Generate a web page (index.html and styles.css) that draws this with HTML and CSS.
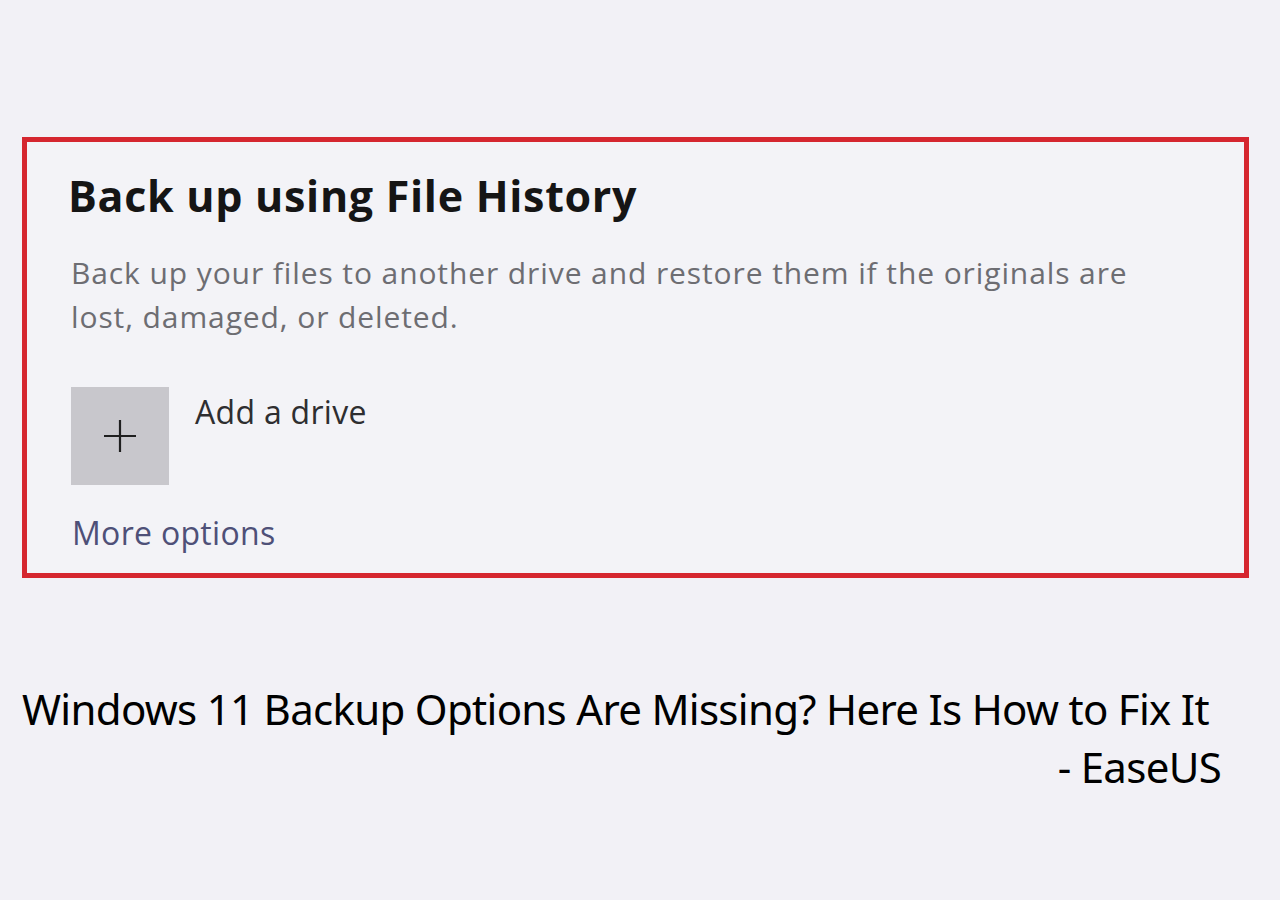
FILE: index.html
```html
<!DOCTYPE html>
<html lang="en">
<head>
<meta charset="utf-8">
<title>Windows 11 Backup Options Are Missing? Here Is How to Fix It - EaseUS</title>
<link rel="stylesheet" href="styles.css">
</head>
<body>
<main class="page">
  <section class="card">
    <h2 class="card-title">Back up using File History</h2>
    <p class="card-desc">Back up your files to another drive and restore them if the originals are lost, damaged, or deleted.</p>
    <div class="drive-row">
      <div class="plus-tile">
        <svg width="34" height="34" viewBox="0 0 34 34" aria-hidden="true">
          <path d="M17 1V33M1 17H33" stroke="#1f1f1f" stroke-width="2.2" fill="none"/>
        </svg>
      </div>
      <span class="drive-label">Add a drive</span>
    </div>
    <a class="more-link">More options</a>
  </section>
  <div class="caption">
    <div class="caption-line">Windows 11 Backup Options Are Missing? Here Is How to Fix It</div>
    <div class="caption-line caption-right">- EaseUS</div>
  </div>
</main>
</body>
</html>
```

FILE: styles.css
```css
html, body {
  margin: 0;
  padding: 0;
}
body {
  background: #f2f1f6;
  width: 1280px;
  height: 900px;
  overflow: hidden;
}
.page {
  padding: 137px 31px 0 22px;
}
.card {
  box-sizing: border-box;
  width: 1227px;
  height: 441px;
  border: 5px solid #d5262f;
  background: #f3f3f7;
  padding: 26px 40px 0 41px;
  font-family: "Open Sans", "Noto Sans", sans-serif;
}
.card-title {
  margin: 0;
  font-size: 43px;
  font-weight: 700;
  color: #151515;
  line-height: 56px;
  letter-spacing: 0.7px;
}
.card-desc {
  margin: 27px 0 0 3px;
  width: 1110px;
  font-size: 30px;
  line-height: 44px;
  letter-spacing: 0.9px;
  color: #6d6d72;
}
.drive-row {
  display: flex;
  align-items: flex-start;
  margin: 48px 0 0 3px;
}
.plus-tile {
  width: 98px;
  height: 98px;
  background: #c8c7cc;
  display: flex;
  align-items: center;
  justify-content: center;
}
.drive-label {
  margin: 3px 0 0 26px;
  font-size: 32px;
  line-height: 44px;
  letter-spacing: 0.3px;
  color: #2e2e30;
}
.more-link {
  display: block;
  margin: 26px 0 0 4px;
  font-size: 32px;
  line-height: 44px;
  letter-spacing: 0.3px;
  color: #4e5078;
}
.caption {
  margin-top: 102px;
  font-family: "Noto Sans", sans-serif;
  font-size: 42px;
  line-height: 58px;
  letter-spacing: -0.7px;
  color: #000;
}
.caption-line {
  white-space: nowrap;
}
.caption-right {
  text-align: right;
  padding-right: 28px;
}
```
